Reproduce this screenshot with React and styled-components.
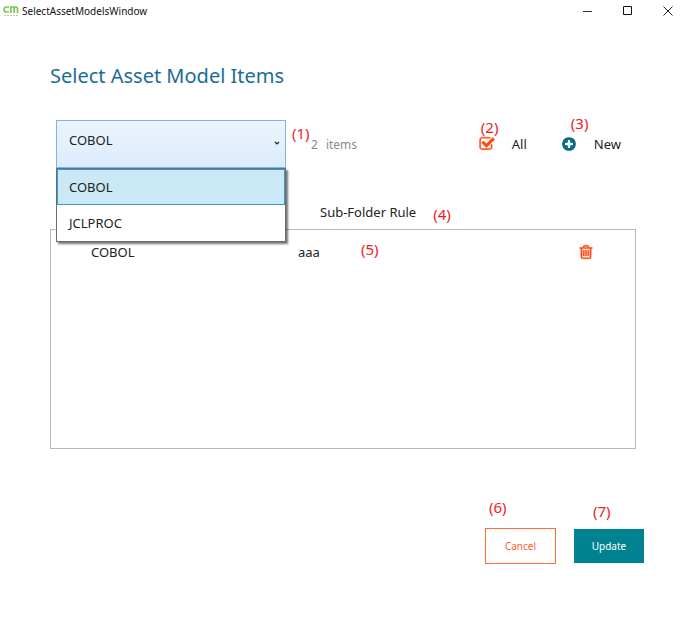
import React, { useState } from "react";
import styled, { createGlobalStyle } from "styled-components";

const GlobalStyle = createGlobalStyle`
  * {
    box-sizing: border-box;
  }

  body {
    margin: 0;
    background: #fff;
    color: #222;
    font-family: "Noto Sans", "Open Sans", sans-serif;
    font-size: 13px;
    line-height: 20px;
  }

  button, select, input {
    font: inherit;
    color: inherit;
  }
`;

const Window = styled.div`
  min-height: 100vh;
  background: #fff;
`;

const TitleBar = styled.header`
  display: flex;
  align-items: center;
  height: 22px;
  padding-left: 3px;
`;

const WindowTitle = styled.span`
  flex: 1;
  margin-left: 3px;
  font-size: 10px;
  color: #111;
`;

const WindowButton = styled.button`
  display: flex;
  align-items: center;
  justify-content: center;
  width: 40px;
  height: 22px;
  padding: 0;
  border: 0;
  background: none;
`;

const WindowButtons = styled.div`
  display: flex;
  margin-right: 4px;
`;

const Main = styled.main`
  padding: 40px 48px 0 50px;
`;

const Heading = styled.h1`
  margin: 0 0 30px;
  font-size: 20px;
  font-weight: 400;
  line-height: 28px;
  color: #1a6e93;
`;

const Toolbar = styled.div`
  display: flex;
  align-items: center;
  padding: 0 23px 0 6px;
`;

const Combo = styled.div`
  position: relative;
  width: 230px;
`;

const Select = styled.select`
  display: block;
  width: 100%;
  height: 48px;
  padding: 0 12px 8px;
  border: 1px solid #7eb4ea;
  border-radius: 0;
  background: linear-gradient(#ebf4fc, #dcecfc);
  appearance: none;
  outline: none;
`;

const Chevron = styled.svg`
  position: absolute;
  top: 21px;
  right: 6px;
  pointer-events: none;
`;

const Options = styled.ul`
  position: absolute;
  top: 100%;
  left: 0;
  right: 0;
  z-index: 2;
  margin: 0;
  padding: 0;
  list-style: none;
  background: #fff;
  border: 1px solid #6e6e6e;
  box-shadow: 2px 2px 2px rgba(0, 0, 0, 0.55);
`;

const Option = styled.li`
  height: 36px;
  padding: 0 11px;
  line-height: 35px;
  border: 1px solid ${(p) => (p.$active ? "#3399cc" : "transparent")};
  background: ${(p) => (p.$active ? "#cbe8f6" : "#fff")};
`;

const Count = styled.span`
  display: flex;
  gap: 8px;
  margin-left: 25px;
  padding-top: 2px;
  font-size: 12px;
  color: #8a8a8a;
`;

const Actions = styled.div`
  display: flex;
  gap: 34px;
  margin-left: auto;
`;

const CheckLabel = styled.label`
  position: relative;
  display: flex;
  align-items: center;
  gap: 17px;
`;

const HiddenCheck = styled.input`
  position: absolute;
  left: 0;
  width: 16px;
  height: 16px;
  margin: 0;
  opacity: 0;
`;

const IconButton = styled.button`
  position: relative;
  display: flex;
  align-items: center;
  gap: 17px;
  padding: 0;
  border: 0;
  background: none;
`;

const Note = styled.span`
  font-size: 15px;
  line-height: 20px;
  color: #ed1c24;
`;

const FloatingNote = styled(Note)`
  position: absolute;
  top: ${(p) => p.$top}px;
  left: ${(p) => p.$left}px;
`;

const Table = styled.table`
  display: block;
  margin: 32px 8px 0 0;
`;

const TableHead = styled.thead`
  display: block;
  height: 29px;
`;

const TableBody = styled.tbody`
  display: block;
  height: 220px;
  padding-top: 12px;
  border: 1px solid #b9b9bd;
`;

const Row = styled.tr`
  display: grid;
  grid-template-columns: 207px 1fr 57px;
  padding-left: 40px;
`;

const HeadRow = styled(Row)`
  grid-template-columns: 230px 1fr;
`;

const HeadCell = styled.th`
  display: flex;
  align-items: flex-end;
  gap: 17px;
  height: 24px;
  padding: 0;
  font-weight: 400;
`;

const HeadText = styled.span`
  align-self: center;
`;

const Cell = styled.td`
  position: relative;
  padding: 0;
`;

const DeleteButton = styled.button`
  display: flex;
  align-items: center;
  height: 20px;
  padding: 0;
  border: 0;
  background: none;
`;

const Footer = styled.footer`
  display: flex;
  align-items: center;
  justify-content: flex-end;
  gap: 18px;
  margin-top: 79px;
`;

const FooterItem = styled.div`
  position: relative;
`;

const Button = styled.button`
  display: block;
  width: ${(p) => (p.$primary ? 70 : 71)}px;
  height: ${(p) => (p.$primary ? 34 : 36)}px;
  padding: 0;
  border: 1px solid ${(p) => (p.$primary ? "#008290" : "#ff6a3c")};
  background: ${(p) => (p.$primary ? "#008290" : "#fff")};
  color: ${(p) => (p.$primary ? "#fff" : "#ff5a2a")};
  font-size: 10px;
`;

const icons = {
  check:
    "M1472 930v318q0 119-84.5 203.5t-203.5 84.5h-832q-119 0-203.5-84.5t-84.5-203.5v-832q0-119 84.5-203.5t203.5-84.5h832q63 0 117 25 15 7 18 23 3 17-9 29l-49 49q-10 10-23 10-3 0-9-2-23-6-45-6h-832q-66 0-113 47t-47 113v832q0 66 47 113t113 47h832q66 0 113-47t47-113v-254q0-13 9-22l64-64q10-10 23-10 6 0 12 3 20 8 20 29zm231-489l-814 814q-24 24-57 24t-57-24l-430-430q-24-24-24-57t24-57l110-110q24-24 57-24t57 24l263 263 647-647q24-24 57-24t57 24l110 110q24 24 24 57t-24 57z",
  plus:
    "M1344 960v-128q0-26-19-45t-45-19h-256v-256q0-26-19-45t-45-19h-128q-26 0-45 19t-19 45v256h-256q-26 0-45 19t-19 45v128q0 26 19 45t45 19h256v256q0 26 19 45t45 19h128q26 0 45-19t19-45v-256h256q26 0 45-19t19-45zm320-64q0 209-103 385.5t-279.5 279.5-385.5 103-385.5-103-279.5-279.5-103-385.5 103-385.5 279.5-279.5 385.5-103 385.5 103 279.5 279.5 103 385.5z",
  trash:
    "M704 736v576q0 14-9 23t-23 9h-64q-14 0-23-9t-9-23v-576q0-14 9-23t23-9h64q14 0 23 9t9 23zm256 0v576q0 14-9 23t-23 9h-64q-14 0-23-9t-9-23v-576q0-14 9-23t23-9h64q14 0 23 9t9 23zm256 0v576q0 14-9 23t-23 9h-64q-14 0-23-9t-9-23v-576q0-14 9-23t23-9h64q14 0 23 9t9 23zm128 724v-948h-896v948q0 22 7 40.5t14.5 27 10.5 8.5h832q3 0 10.5-8.5t14.5-27 7-40.5zm-672-1076h448l-48-117q-7-9-17-11h-317q-10 2-17 11zm928 32v64q0 14-9 23t-23 9h-96v948q0 83-47 143.5t-113 60.5h-832q-66 0-113-58.5t-47-141.5v-952h-96q-14 0-23-9t-9-23v-64q0-14 9-23t23-9h309l70-167q15-37 54-63t79-26h320q40 0 79 26t54 63l70 167h309q14 0 23 9t9 23z",
};

const Icon = ({ name, color, stroke = 0 }) => (
  <svg
    width="16"
    height="16"
    viewBox="0 0 1792 1792"
    fill={color}
    stroke={color}
    strokeWidth={stroke}
    aria-hidden="true"
  >
    <path d={icons[name]} />
  </svg>
);

const Logo = () => (
  <svg width="16" height="14" viewBox="0 0 16 14" fill="none" aria-hidden="true">
    <path
      d="M6 3H3Q1.2 3 1.2 5.5T3 8H6M7.8 9V3H13Q14.5 3 14.5 5V9M11.2 3V9"
      stroke="#7ac655"
      strokeWidth="1.7"
    />
    <path d="M1 11.5H15" stroke="#b5cdb0" strokeWidth="1" strokeDasharray="2 1" />
  </svg>
);

const models = ["COBOL", "JCLPROC"];

const App = () => {
  const [model, setModel] = useState("COBOL");
  const [all, setAll] = useState(true);

  return (
    <Window>
      <GlobalStyle />
      <TitleBar>
        <Logo />
        <WindowTitle>SelectAssetModelsWindow</WindowTitle>
        <WindowButtons>
          <WindowButton aria-label="Minimize">
            <svg width="10" height="10" stroke="#333">
              <path d="M0 5.5H9" />
            </svg>
          </WindowButton>
          <WindowButton aria-label="Maximize">
            <svg width="10" height="10" fill="none" stroke="#111">
              <path d="M0.5 0.5H8.5V8.5H0.5Z" />
            </svg>
          </WindowButton>
          <WindowButton aria-label="Close">
            <svg width="10" height="10" stroke="#222">
              <path d="M0.5 0.5L9.5 9.5M9.5 0.5L0.5 9.5" />
            </svg>
          </WindowButton>
        </WindowButtons>
      </TitleBar>

      <Main>
        <Heading>Select Asset Model Items</Heading>

        <Toolbar>
          <Combo>
            <Select
              aria-label="Asset model"
              value={model}
              onChange={(e) => setModel(e.target.value)}
            >
              {models.map((m) => (
                <option key={m}>{m}</option>
              ))}
            </Select>
            <Chevron width="6" height="5" fill="none" stroke="#222">
              <path d="M1 1L3 3L5 1" strokeWidth="1.2" />
            </Chevron>
            <Options role="listbox" aria-label="Asset models">
              {models.map((m) => (
                <Option
                  key={m}
                  role="option"
                  aria-selected={m === model}
                  $active={m === model}
                  onClick={() => setModel(m)}
                >
                  {m}
                </Option>
              ))}
            </Options>
            <FloatingNote $top={3} $left={236}>(1)</FloatingNote>
          </Combo>
          <Count>
            <span>2</span>
            <span>items</span>
          </Count>
          <Actions>
            <CheckLabel>
              <HiddenCheck
                type="checkbox"
                checked={all}
                onChange={(e) => setAll(e.target.checked)}
              />
              <Icon name="check" color="#ff4a12" stroke={50} />
              All
              <FloatingNote $top={-17} $left={2}>(2)</FloatingNote>
            </CheckLabel>
            <IconButton>
              <Icon name="plus" color="#05698c" />
              New
              <FloatingNote $top={-21} $left={10}>(3)</FloatingNote>
            </IconButton>
          </Actions>
        </Toolbar>

        <Table>
          <TableHead>
            <HeadRow>
              <HeadCell />
              <HeadCell>
                <HeadText>Sub-Folder Rule</HeadText>
                <Note>(4)</Note>
              </HeadCell>
            </HeadRow>
          </TableHead>
          <TableBody>
            <Row>
              <Cell>COBOL</Cell>
              <Cell>
                aaa
                <FloatingNote $top={-3} $left={63}>(5)</FloatingNote>
              </Cell>
              <Cell>
                <DeleteButton aria-label="Delete">
                  <Icon name="trash" color="#ff4a12" stroke={60} />
                </DeleteButton>
              </Cell>
            </Row>
          </TableBody>
        </Table>

        <Footer>
          <FooterItem>
            <Button>Cancel</Button>
            <FloatingNote $top={-31} $left={4}>(6)</FloatingNote>
          </FooterItem>
          <FooterItem>
            <Button $primary>Update</Button>
            <FloatingNote $top={-28} $left={19}>(7)</FloatingNote>
          </FooterItem>
        </Footer>
      </Main>
    </Window>
  );
};

export default App;
